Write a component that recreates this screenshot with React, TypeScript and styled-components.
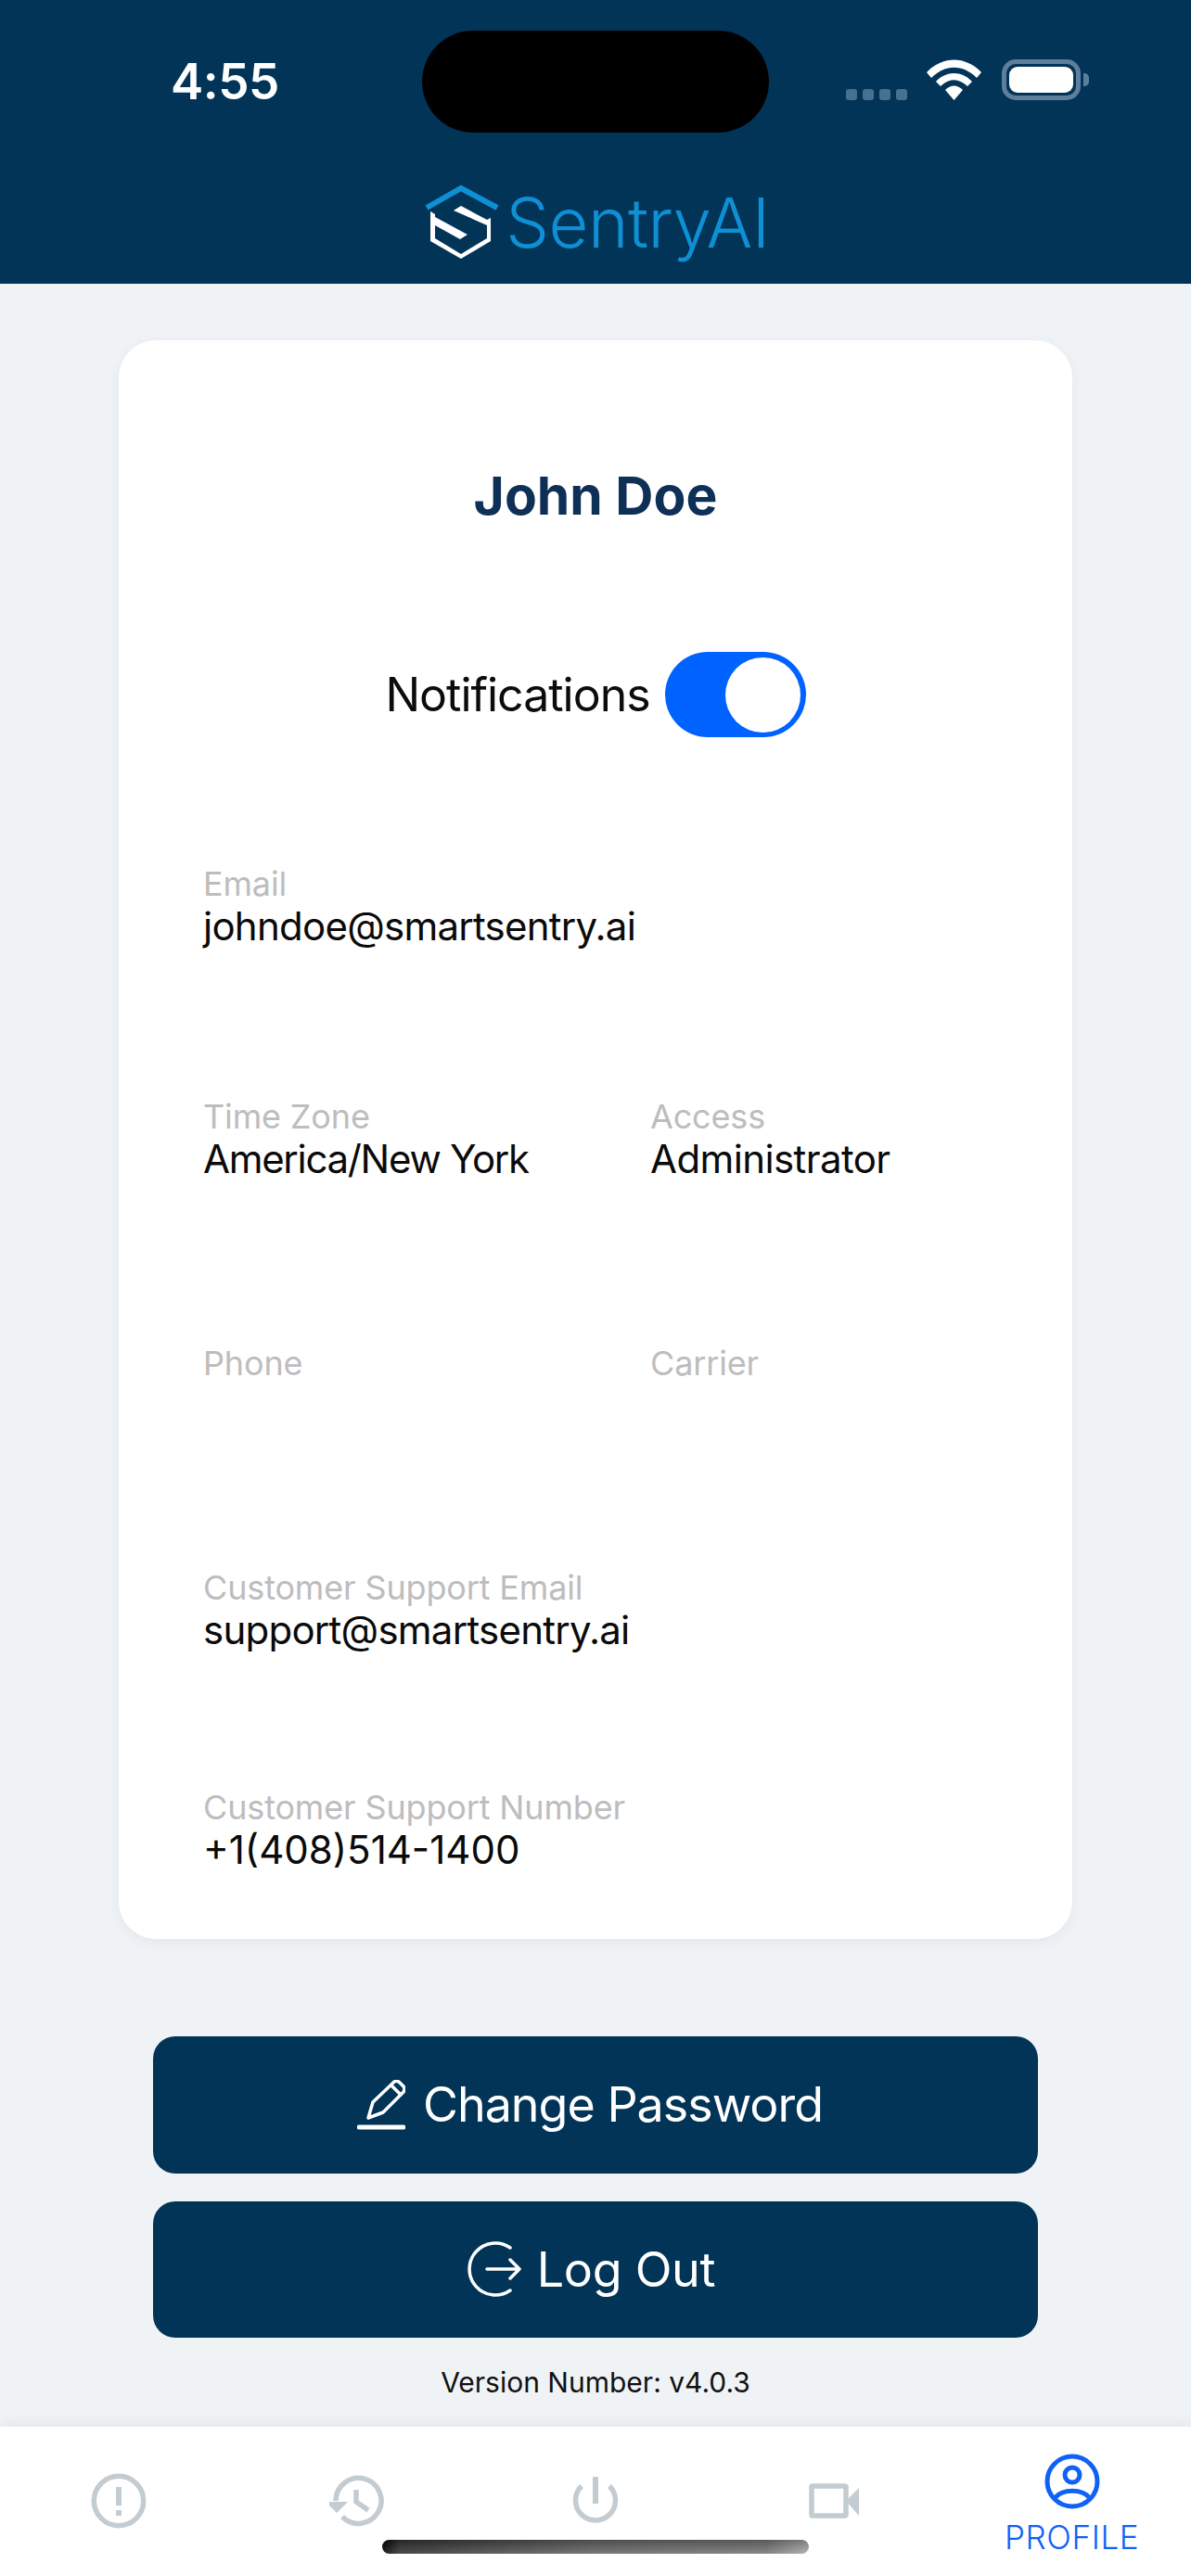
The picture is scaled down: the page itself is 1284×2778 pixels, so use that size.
import React from "react";
import styled, { createGlobalStyle } from "styled-components";

const Global = createGlobalStyle`
  html, body { margin: 0; padding: 0; background: #eff3f6; }
  * { box-sizing: border-box; }
  body { font-family: Inter, "Liberation Sans", sans-serif; }
`;

const Screen = styled.div`
  width: 1284px;
  height: 2778px;
  position: relative;
  display: flex;
  flex-direction: column;
  overflow: hidden;
  background: #eff3f6;
`;

const Header = styled.header`
  height: 306px;
  flex: none;
  background: #023458;
  padding-top: 33px;
  display: flex;
  flex-direction: column;
  align-items: center;
`;

const StatusBar = styled.div`
  width: 100%;
  height: 110px;
  display: grid;
  grid-template-columns: 1fr 374px 1fr;
`;

const Time = styled.div`
  padding-left: 184px;
  font-size: 53px;
  line-height: 110px;
  font-weight: 600;
  color: #fff;
  letter-spacing: -0.5px;
`;

const Island = styled.div`
  background: #000;
  border-radius: 55px;
`;

const StatusIcons = styled.div`
  display: flex;
  align-items: flex-end;
  padding: 0 0 35px 83px;
`;

const SignalDots = styled.div`
  display: flex;
  gap: 6px;
  margin-right: 21px;
`;

const SignalDot = styled.span`
  width: 12px;
  height: 12px;
  border-radius: 3px;
  background: #48708f;
`;

const Battery = styled.div`
  width: 85px;
  height: 44px;
  margin-left: 22px;
  border: 5px solid #5d7f9b;
  border-radius: 15px;
  padding: 3px;
  position: relative;
`;

const BatteryFill = styled.div`
  width: 100%;
  height: 100%;
  border-radius: 9px;
  background: #fff;
`;

const BatteryCap = styled.div`
  position: absolute;
  right: -14px;
  top: 10px;
  width: 6px;
  height: 14px;
  border-radius: 0 5px 5px 0;
  background: #5d7f9b;
`;

const Logo = styled.div`
  margin-top: 52px;
  display: flex;
  align-items: flex-start;
  height: 90px;
`;

const LogoText = styled.span`
  font-family: Inter, sans-serif;
  font-weight: 300;
  font-size: 74px;
  line-height: 90px;
  letter-spacing: -0.5px;
  color: #0f8fd4;
  margin-left: 1px;
`;

const Main = styled.main`
  flex: 1;
  display: flex;
  flex-direction: column;
  padding: 61px 128px 0;
`;

const Card = styled.section`
  background: #fff;
  border-radius: 40px;
  padding: 134px 91px 73px;
  box-shadow: 0 4px 14px rgba(30, 50, 80, 0.06);
`;

const Name = styled.h1`
  margin: 0;
  text-align: center;
  font-size: 57px;
  line-height: 68px;
  font-weight: 700;
  color: #0e2f56;
`;

const NotificationRow = styled.div`
  margin-top: 134px;
  display: flex;
  align-items: center;
  justify-content: center;
  gap: 16px;
  font-size: 50px;
  letter-spacing: -1px;
  color: #0c0c0c;
`;

const Toggle = styled.div`
  width: 152px;
  height: 92px;
  border-radius: 46px;
  background: #0062ff;
  padding: 6px;
  display: flex;
  justify-content: flex-end;
`;

const Thumb = styled.div`
  width: 81px;
  height: 81px;
  border-radius: 50%;
  background: #fff;
`;

const FieldRow = styled.div<{ $top: number }>`
  margin-top: ${(p) => p.$top}px;
  display: grid;
  grid-template-columns: 482px 1fr;
`;

const Field = styled.div`
  min-height: 92px;
  white-space: nowrap;
`;

const Label = styled.div`
  font-size: 36px;
  line-height: 46px;
  letter-spacing: -0.15px;
  color: #bdbdbd;
`;

const Value = styled.div<{ $tracking?: number }>`
  font-size: 42px;
  line-height: 46px;
  letter-spacing: ${(p) => p.$tracking ?? -0.75}px;
  color: #0a0a0a;
`;

const Actions = styled.div`
  margin: 105px 37px 0;
  display: flex;
  flex-direction: column;
  gap: 30px;
`;

const ActionButton = styled.button<{ $gap: number; $tracking: number }>`
  height: 147.5px;
  border: 0;
  border-radius: 24px;
  background: #023458;
  color: #fff;
  font: 400 52px Inter, sans-serif;
  letter-spacing: ${(p) => p.$tracking}px;
  display: flex;
  align-items: center;
  justify-content: center;
  gap: ${(p) => p.$gap}px;
  padding: 0 12px 0 0;
`;

const Version = styled.div`
  margin-top: 28px;
  text-align: center;
  font-size: 30px;
  line-height: 40px;
  color: #111;
`;

const TabBar = styled.nav`
  flex: none;
  height: 161px;
  background: #fff;
  box-shadow: 0 -4px 14px rgba(0, 0, 0, 0.05);
  display: grid;
  grid-template-columns: repeat(5, 1fr);
  position: relative;
`;

const Tab = styled.div<{ $active?: boolean }>`
  display: flex;
  flex-direction: column;
  align-items: center;
  padding-top: ${(p) => (p.$active ? 29 : 50)}px;
  color: ${(p) => (p.$active ? "#0f62f5" : "#c3ccd0")};
`;

const TabLabel = styled.span`
  font-size: 35px;
  line-height: 40px;
  font-weight: 300;
  letter-spacing: 0.6px;
  margin-top: 10px;
`;

const HomeIndicator = styled.div`
  position: absolute;
  left: 412px;
  top: 122px;
  width: 460px;
  height: 15px;
  border-radius: 8px;
  background: linear-gradient(180deg, rgba(0, 0, 0, 0.25), rgba(255, 255, 255, 0.12)),
    linear-gradient(90deg, #000 0%, #333 4%, #666 50%, #777 90%, #aaa 100%);
`;

const Wifi = () => (
  <svg width="59" height="44" viewBox="0 0 59 44" fill="#fff">
    <path d="M0 14 C17 -4 42 -4 59 14 L54 20 C39 5 20 5 5 20 Z" />
    <path d="M10 24 C21 12 38 12 49 24 L44 29 C34 20 25 20 15 29 Z" />
    <path d="M20 33 C26 27 33 27 39 33 L29.5 44 Z" />
  </svg>
);

const LogoMark = () => (
  <svg width="90" height="90" viewBox="0 0 90 90">
    <path d="M6 29 L43 8 L82 29" fill="none" stroke="#0f8fd4" strokeWidth="6" />
    <path
      d="M10 33 L15 36 L15 39 L50 58 L42 63 L15 48 L15 62 L43 79 L71 62 L71 48 L35 32 L43 27 L71 42 L75 40 L75 65 L43 84 L10 65 Z"
      fill="#fff"
    />
  </svg>
);

const PencilIcon = () => (
  <svg width="52" height="54" viewBox="0 0 52 54" fill="none" stroke="#fff" strokeWidth="3.5" strokeLinejoin="round" strokeLinecap="round">
    <path d="M12 41 L17 24 L40 2 Q43 0 46 3 L50 7 Q52 10 50 13 L28 35 Z" />
    <path d="M37 6 L46 15" />
    <path d="M2 51 L50 51" strokeWidth="5" />
  </svg>
);

const LogoutIcon = () => (
  <svg width="61" height="60" viewBox="0 0 61 60" fill="none" stroke="#fff" strokeWidth="3.5" strokeLinecap="round" strokeLinejoin="round">
    <path d="M49 7 A28 28 0 1 0 49 53" />
    <path d="M24 30 L58 30 M49 20 L59 30 L49 40" />
  </svg>
);

const AlertIcon = () => (
  <svg width="60" height="60" viewBox="0 0 60 60" fill="none" stroke="currentColor" strokeWidth="5.5">
    <circle cx="30" cy="30" r="26.7" />
    <path d="M30 15 V35 M30 40 V46" strokeWidth="6" />
  </svg>
);

const HistoryIcon = () => (
  <svg width="60" height="60" viewBox="0 0 60 60" fill="none" stroke="currentColor" strokeWidth="5.5">
    <path d="M7 30 A24.5 24.5 0 1 1 14 47" />
    <path d="M-4 31 L20 31 L8 43 Z" fill="currentColor" stroke="none" />
    <path d="M29 18 V31 L42 40" />
  </svg>
);

const PowerIcon = () => (
  <svg width="60" height="60" viewBox="0 0 60 60" fill="none" stroke="currentColor" strokeWidth="5.5">
    <path d="M15 14 A21.5 21.5 0 1 0 45 14" />
    <path d="M30 4 V33" strokeWidth="6" />
  </svg>
);

const VideoIcon = () => (
  <svg width="60" height="60" viewBox="0 0 60 60" fill="none" stroke="currentColor" strokeWidth="5.5">
    <rect x="6" y="14" width="37" height="32" rx="1" />
    <path d="M43 30 L57 16 V46 Z" fill="currentColor" stroke="none" />
  </svg>
);

const ProfileIcon = () => (
  <svg width="60" height="60" viewBox="0 0 60 60" fill="none" stroke="currentColor" strokeWidth="5">
    <circle cx="30" cy="30" r="27" />
    <circle cx="30" cy="23" r="8" />
    <path d="M12 47 C20 38 40 38 48 47" />
  </svg>
);

export default function App() {
  return (
    <Screen>
      <Global />
      <Header>
        <StatusBar>
          <Time>4:55</Time>
          <Island />
          <StatusIcons>
            <SignalDots>
              <SignalDot />
              <SignalDot />
              <SignalDot />
              <SignalDot />
            </SignalDots>
            <Wifi />
            <Battery>
              <BatteryFill />
              <BatteryCap />
            </Battery>
          </StatusIcons>
        </StatusBar>
        <Logo>
          <LogoMark />
          <LogoText>SentryAI</LogoText>
        </Logo>
      </Header>
      <Main>
        <Card>
          <Name>John Doe</Name>
          <NotificationRow>
            <span>Notifications</span>
            <Toggle>
              <Thumb />
            </Toggle>
          </NotificationRow>
          <FieldRow $top={135}>
            <Field>
              <Label>Email</Label>
              <Value>johndoe@smartsentry.ai</Value>
            </Field>
          </FieldRow>
          <FieldRow $top={159}>
            <Field>
              <Label>Time Zone</Label>
              <Value $tracking={-1.3}>America/New York</Value>
            </Field>
            <Field>
              <Label>Access</Label>
              <Value $tracking={-0.6}>Administrator</Value>
            </Field>
          </FieldRow>
          <FieldRow $top={174}>
            <Field>
              <Label>Phone</Label>
            </Field>
            <Field>
              <Label>Carrier</Label>
            </Field>
          </FieldRow>
          <FieldRow $top={150}>
            <Field>
              <Label>Customer Support Email</Label>
              <Value>support@smartsentry.ai</Value>
            </Field>
          </FieldRow>
          <FieldRow $top={145}>
            <Field>
              <Label>Customer Support Number</Label>
              <Value $tracking={0}>+1(408)514-1400</Value>
            </Field>
          </FieldRow>
        </Card>
        <Actions>
          <ActionButton $gap={19} $tracking={-1}>
            <PencilIcon />
            Change Password
          </ActionButton>
          <ActionButton $gap={17} $tracking={-0.3}>
            <LogoutIcon />
            Log Out
          </ActionButton>
        </Actions>
        <Version>Version Number: v4.0.3</Version>
      </Main>
      <TabBar>
        <Tab>
          <AlertIcon />
        </Tab>
        <Tab>
          <HistoryIcon />
        </Tab>
        <Tab>
          <PowerIcon />
        </Tab>
        <Tab>
          <VideoIcon />
        </Tab>
        <Tab $active>
          <ProfileIcon />
          <TabLabel>PROFILE</TabLabel>
        </Tab>
        <HomeIndicator />
      </TabBar>
    </Screen>
  );
}
